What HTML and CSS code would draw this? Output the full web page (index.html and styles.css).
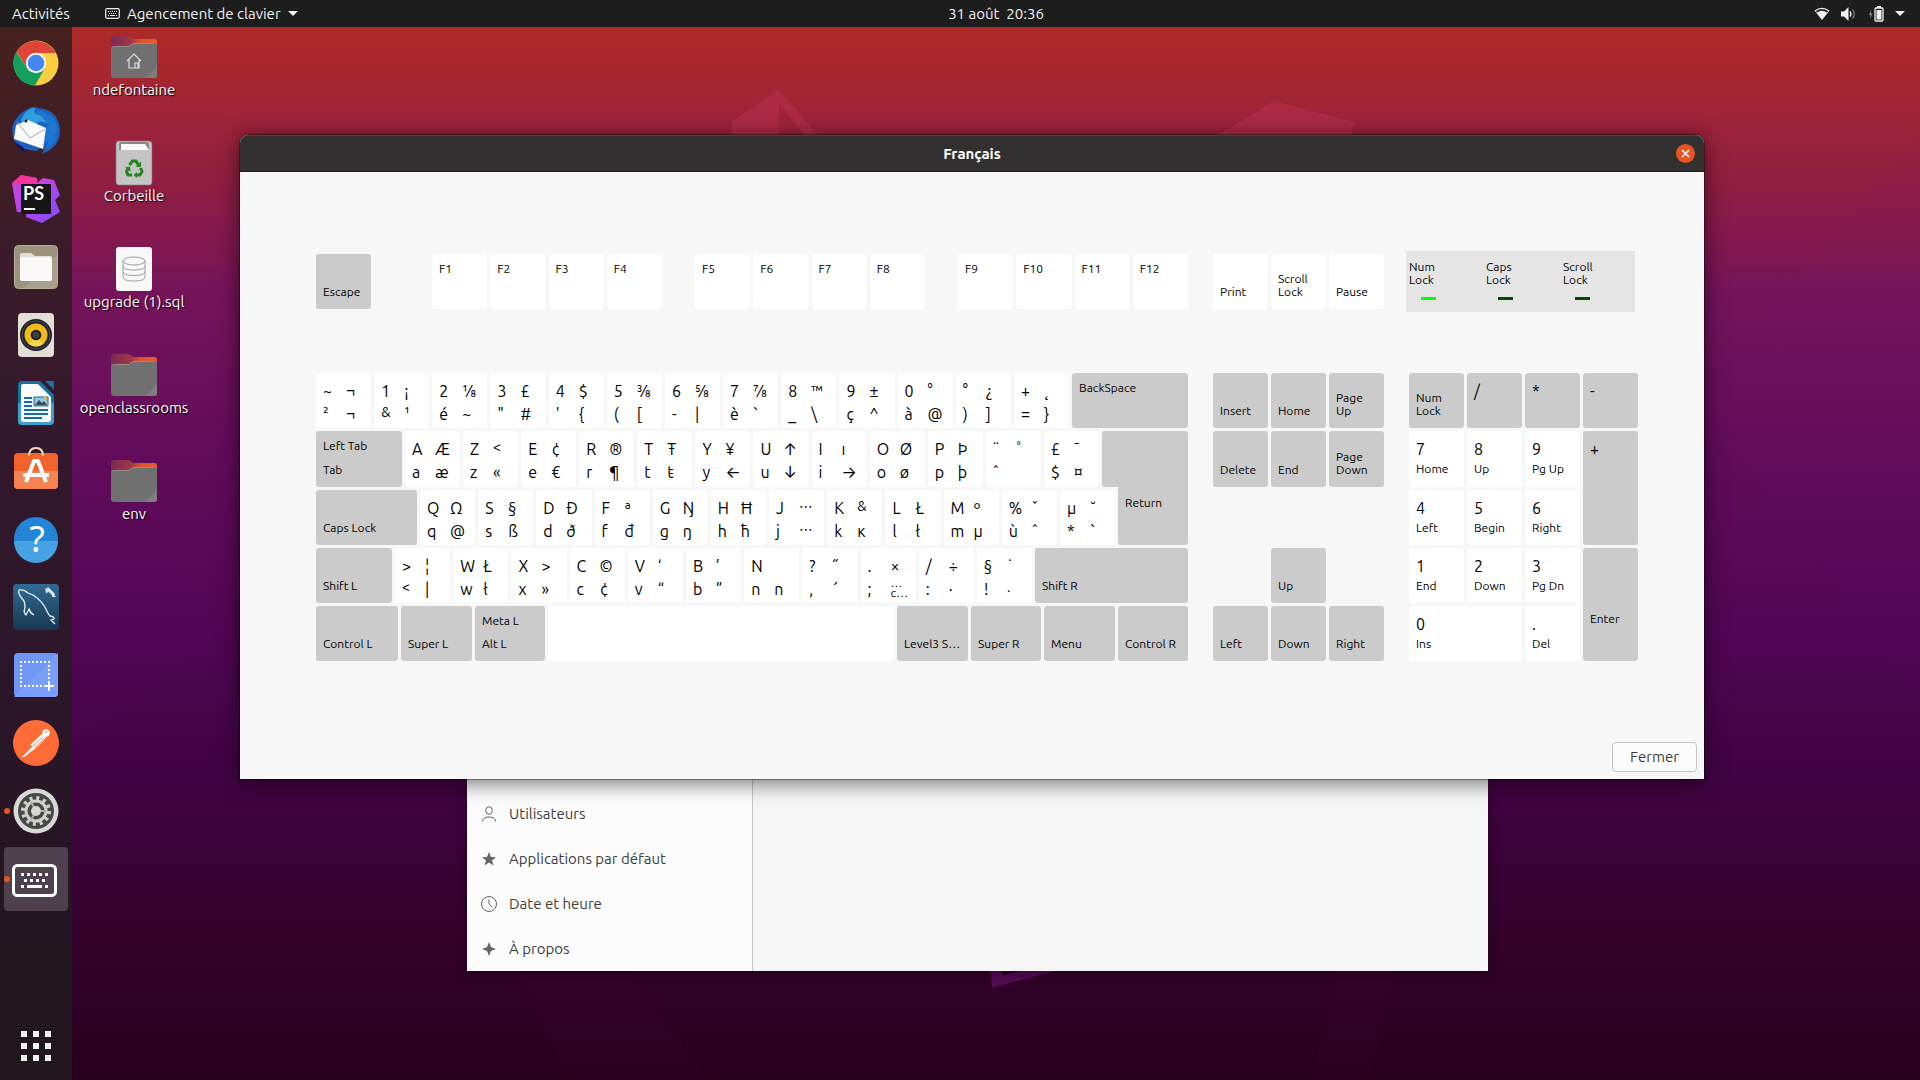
FILE: index.html
```html
<!DOCTYPE html>
<html lang="fr">
<head>
<meta charset="utf-8">
<title>Agencement de clavier</title>
<link rel="stylesheet" href="styles.css">
</head>
<body>
<header class="topbar">
  <button class="bar-item activities">Activités</button>
  <button class="bar-item app-menu">
    <svg width="15" height="11" viewBox="0 0 15 11"><rect x=".7" y=".7" width="13.6" height="9.6" rx="1.5" fill="none" stroke="#f2f2f2" stroke-width="1.2"/><path d="M3 3.5h9M4 5.5h7" stroke="#f2f2f2" stroke-dasharray="1 1"/><path d="M3 7.500h1m1 0h5m1 0h1" stroke="#f2f2f2"/></svg>
    Agencement de clavier
    <svg class="caret" width="10" height="5" viewBox="0 0 10 5"><path d="M0 0h10L5 5z" fill="#f2f2f2"/></svg>
  </button>
  <button class="bar-item clock">31 août&nbsp; 20:36</button>
  <button class="bar-item status" aria-label="Système">
    <svg width="16" height="14" viewBox="0 0 16 14"><path d="M.5 3.500Q8-2 15.500 3.500L8 13z" fill="#f2f2f2"/><path d="M1.800 4Q8 0 14.200 4L13 5.500Q8 2.200 3 5.500z" fill="#1d1d1d"/></svg>
    <svg width="16" height="14" viewBox="0 0 16 14"><path d="M0 4.500h3L7.500 0v14L3 9.500H0z" fill="#f2f2f2"/><path d="M9 4.500q2 2.500 0 5" fill="none" stroke="#f2f2f2" stroke-width="1.300"/><path d="M11.500 2.500q3.500 4.500 0 9" fill="none" stroke="#888" stroke-width="1.200"/></svg>
    <svg width="16" height="16" viewBox="0 0 16 16"><path d="M3 4L1 9h1.500L2 13l2.500-5.500H3z" fill="#888"/><rect x="7" y="2" width="8" height="13" rx="1" fill="none" stroke="#f2f2f2" stroke-width="1.300"/><path d="M9 0h4v2H9zM8.500 4h5v9.500h-5z" fill="#f2f2f2"/></svg>
    <svg width="10" height="5" viewBox="0 0 10 5"><path d="M0 0h10L5 5z" fill="#f2f2f2"/></svg>
  </button>
</header>

<div class="screen">
<svg class="wallpaper" viewBox="0 27 1920 1053" preserveAspectRatio="none" aria-hidden="true">
  <defs><linearGradient id="wall" x1="0" y1="0" x2="0" y2="1">
    <stop offset="0" stop-color="#ae2a28"/><stop offset=".07" stop-color="#a22535"/><stop offset=".14" stop-color="#921f41"/><stop offset=".25" stop-color="#76145a"/><stop offset=".4" stop-color="#620c5b"/><stop offset=".58" stop-color="#510655"/><stop offset=".7" stop-color="#430345"/><stop offset=".84" stop-color="#36022f"/><stop offset="1" stop-color="#27001e"/>
  </linearGradient></defs>
  <rect y="27" width="1920" height="1053" fill="url(#wall)"/>
  <g fill="#b52f4c" opacity=".6"><path d="M732 121L779 90v80h-47zM779 90l39 45 20 25h-14l-45-57zM1160 170l114-69 80 21-7 40z"/></g>
  <path d="M990 960l2 28 90-24-10-8-70 20-2-16z" fill="#6a1070" opacity=".6"/>
  <path d="M0 380L240 620 0 800zM1920 130L1700 400l220 300z" fill="#8a2080" opacity=".04"/>
  <path d="M510 960h110l90 120H570zM1400 960h-60l-30 120h60z" fill="#7a1080" opacity=".04"/>
</svg>

<nav class="dock" aria-label="Lanceur">
  <button class="launcher" aria-label="Chrome"><svg viewBox="0 0 48 48"><circle cx="24" cy="24" r="22.500" fill="#ffcd40"/><path d="M24 24L4.500 12.700A22.500 22.500 0 0 1 43.500 14H24z" fill="#de4437"/><path d="M4.500 12.700A22.500 22.500 0 0 0 23 46.500L33 29 24 34 15 29z" fill="#14a05c"/><path d="M5 12.700A22.500 22.500 0 0 1 43.500 14H24L15 29z" fill="#de4437"/><circle cx="24" cy="24" r="10.200" fill="#f5f5f5"/><circle cx="24" cy="24" r="8.300" fill="#4486f4"/></svg></button>
  <button class="launcher" aria-label="Thunderbird"><svg viewBox="0 0 48 48"><path d="M2 15Q8 5 16 2q5-4 10-1 17 1 21 16 4 17-9 26l-8 4 2-5-3-2-4 4Q8 43 3 35-2 25 2 15z" fill="#1c62bd"/><path d="M9 14Q13 1 24 1q-3 3-1 6 10 0 14 10l-9-3-8 6z" fill="#2fa0dc"/><path d="M27 3q17 5 19 20l-5 6 4-1q-1 9-11 15l3-10-6 5 4-20q-3-9-13-13z" fill="#1b76d2"/><path d="M3 35q2 8 11 11l-3-6z" fill="#20125c"/><path d="M4 18l12-5 18 8-3 21-29-10z" fill="#fafafa"/><path d="M5 15l13 16 15-9" fill="none" stroke="#a8a8a8"/><circle cx="14" cy="14" r="1.500" fill="#123"/></svg></button>
  <button class="launcher" aria-label="PhpStorm"><svg viewBox="0 0 48 48"><defs><linearGradient id="ps" x1="0" y1="0" x2="1" y2="1"><stop offset="0" stop-color="#ff318c"/><stop offset=".3" stop-color="#d83fd8"/><stop offset=".6" stop-color="#a946f0"/><stop offset="1" stop-color="#7a50ff"/></linearGradient></defs><path d="M0 8l9-8 16 3v5l6-5 11 2 6 15-5 5 5 12-18 11-16-6v-4l-9-1z" fill="url(#ps)"/><path d="M0 8l9-8 16 3v5l-9 6z" fill="#ff318c" opacity=".7"/><path d="M0 8l9 1v28H5z" fill="#b148ee" opacity=".7"/><path d="M9 9h30v30H9z" fill="#161616"/><path d="M12 33h11v2H12z" fill="#fff"/><text x="11" y="25" class="ps-text">PS</text></svg></button>
  <button class="launcher" aria-label="Fichiers"><svg viewBox="0 0 48 48"><rect x="2.500" y="2.500" width="43" height="43" rx="4" fill="#9b937e" stroke="#b5ae9b"/><path d="M45 12v30q0 3-3 3H12z" fill="#a8a18d"/><path d="M8 12q0-2 2-2h9l4 3h15q2 0 2 2v6H8z" fill="#e2ded4"/><rect x="8" y="14" width="32" height="24" rx="2" fill="#faf9f7"/></svg></button>
  <button class="launcher" aria-label="Rhythmbox"><svg viewBox="0 0 48 48"><rect x="6" y="2" width="36" height="44" rx="4" fill="#e4dfd6"/><circle cx="24" cy="24" r="16" fill="#20222a"/><circle cx="24" cy="24" r="14" fill="none" stroke="#4a4d55"/><circle cx="24" cy="24" r="11.500" fill="#f0bb16"/><path d="M24 24l7 9a11.500 11.500 0 0 1-14 0z" fill="#f8d850"/><circle cx="24" cy="24" r="5.300" fill="#1b1d20"/><circle cx="24" cy="24" r="3.500" fill="#3c3e40"/></svg></button>
  <button class="launcher" aria-label="LibreOffice Writer"><svg viewBox="0 0 48 48"><path d="M10 2h18l14 14v26q0 4-4 4H10q-4 0-4-4V6q0-4 4-4z" fill="#1672a5"/><path d="M6 24h36v18q0 4-4 4H10q-4 0-4-4z" fill="#3f9fcb"/><path d="M33 2h9v9z" fill="#1672a5"/><path d="M11 5h15l13 13v22q0 3-3 3H12q-3 0-3-3V7q0-2 2-2z" fill="#fafafa"/><path d="M12 19h8m-8 4h8m-8 4h8m-8 4h24m-24 4h24m-24 4h18" stroke="#0f6ea7" stroke-width="2"/><path d="M22 18h14v9H22z" fill="#8ccaf0" stroke="#146a9b"/><path d="M23 26l4-5 3 3 2-2 3 4z" fill="#444"/><path d="M31 18h4v4z" fill="#f5b41e"/></svg></button>
  <button class="launcher" aria-label="Logiciels"><svg viewBox="0 0 48 48"><rect x="2" y="6" width="44" height="36" rx="4" fill="#f2622a"/><path d="M2 24h44v14q0 4-4 4H6q-4 0-4-4z" fill="#f58250"/><path d="M17 9q0-8 7-8t7 8" fill="none" stroke="#f6deb8" stroke-width="2"/><path d="M14 35l8-21h4l8 21M11 28h26" fill="none" stroke="#fff" stroke-width="4" stroke-linejoin="round"/></svg></button>
  <button class="launcher" aria-label="Aide"><svg viewBox="0 0 48 48"><circle cx="24" cy="24" r="22" fill="#2385d8"/><path d="M2 26a22 22 0 0 0 44 0z" fill="#45a3e5"/><text x="25" y="37" text-anchor="middle" class="help-text">?</text></svg></button>
  <button class="launcher" aria-label="MySQL Workbench"><svg viewBox="0 0 48 48"><defs><linearGradient id="wb" x1="0" y1="0" x2="0" y2="1"><stop offset="0" stop-color="#326a96"/><stop offset="1" stop-color="#173850"/></linearGradient></defs><rect x="1" y="1" width="46" height="46" rx="4" fill="url(#wb)"/><path d="M12 18Q5 10 7 7q5-1 9 3 10 3 17 14 3 7 5 9 5 1 4 3l-3 1 4 4M12 18q1 3 1 7-2 4 1 7l3-6q1 4 5 6" fill="none" stroke="#e8f2f8" stroke-width="1.300"/><path d="M35 5l7 7" stroke="#dce9f2" stroke-width="3"/><path d="M33 5l4 4-3 1zM40 9l4 5-4 0z" fill="#dce9f2"/></svg></button>
  <button class="launcher" aria-label="Capture d’écran"><svg viewBox="0 0 48 48"><rect x="2" y="2" width="44" height="44" rx="4" fill="#6f97f8"/><path d="M2 46L46 2v40q0 4-4 4z" fill="#7a9ffb"/><path d="M8 11h30M8 35h26M9 14v22M37 14v18" stroke="#fff" stroke-width="2" stroke-dasharray="2 2"/><path d="M37 30v10M32 35h10" stroke="#fff" stroke-width="2"/></svg></button>
  <button class="launcher" aria-label="Postman"><svg viewBox="0 0 48 48"><circle cx="24" cy="24" r="23" fill="#ff6c37"/><circle cx="34" cy="14" r="3.700" fill="#fff"/><path d="M30 15q3 1 4 3-5 8-14 14L12 38H10l3-3 8-8-3-1z" fill="#fff"/><path d="M21 27l10-9M23 29l9-9M33 14l3-2" stroke="#ff6c37" stroke-width=".8"/></svg></button>
  <button class="launcher running" aria-label="Paramètres"><svg viewBox="0 0 48 48"><circle cx="24" cy="24" r="22.500" fill="#d9dad8"/><circle cx="24" cy="24" r="18" fill="#474846"/><circle cx="24" cy="24" r="13" fill="none" stroke="#d0d0ce" stroke-width="4" stroke-dasharray="3 3.800"/><circle cx="24" cy="24" r="10" fill="none" stroke="#d0d0ce" stroke-width="3"/><path d="M24 24h10M24 24l-5-9M24 24l-5 9" stroke="#aaa" stroke-width="2"/><circle cx="24" cy="24" r="5" fill="#d6d6d4"/></svg></button>
  <button class="launcher running active" aria-label="Agencement de clavier"><svg viewBox="0 0 48 48"><rect x="1.500" y="10.500" width="42" height="30" rx="4" fill="none" stroke="#fff" stroke-width="3"/><path d="M9 19.500h27" stroke="#fff" stroke-width="3" stroke-dasharray="3 3"/><path d="M12 25.500h21" stroke="#fff" stroke-width="3" stroke-dasharray="3 3"/><path d="M9 31.500h3m3 0h15m3 0h3" stroke="#fff" stroke-width="3"/></svg></button>
  <button class="launcher show-apps" aria-label="Afficher les applications"><svg viewBox="0 0 48 48" fill="#f0f0ee"><path d="M9 9h6v6H9zm12 0h6v6h-6zm12 0h6v6h-6zM9 21h6v6H9zm12 0h6v6h-6zm12 0h6v6h-6zM9 33h6v6H9zm12 0h6v6h-6zm12 0h6v6h-6z"/></svg></button>
</nav>

<main class="desktop">
  <svg width="0" height="0" class="defs" aria-hidden="true"><defs>
    <linearGradient id="fold" x1="0" y1="0" x2="1" y2="0"><stop offset="0" stop-color="#7a2a55"/><stop offset=".45" stop-color="#a03848"/><stop offset=".6" stop-color="#d9502c"/><stop offset="1" stop-color="#e8602c"/></linearGradient>
    <symbol id="folder" viewBox="0 0 46 46"><path d="M0 5q0-3 3-3h15l4 3h21q3 0 3 3v14H0z" fill="url(#fold)"/><path d="M0 15q0-3 3-3h15l4-3h21q3 0 3 3v29q0 3-3 3H3q-3 0-3-3z" fill="#707070"/><path d="M46 32v9q0 3-3 3h-9z" fill="#7e7e7e"/><path d="M1 13.500q0-1 2-1h15l4-3h21" fill="none" stroke="#9a8a8a"/></symbol>
  </defs></svg>
  <div class="shortcuts">
    <button class="shortcut"><svg viewBox="0 0 46 46"><use href="#folder"/><path d="M16 27l7-7 7 7M18 26v8h10v-8M24 34v-5h3v5" fill="none" stroke="#ddd" stroke-width="1.200"/></svg>ndefontaine</button>
    <button class="shortcut"><svg viewBox="0 0 46 46"><rect x="5" y="1" width="36" height="44" rx="3" fill="#c4c4c4" stroke="#8b7480" stroke-width=".6"/><path d="M8 4q0-2 2-2h26q2 0 2 2v6H8z" fill="#8a8a8a"/><path d="M10 4h24l4 6H10z" fill="#fafafa"/><g fill="none" stroke="#27831f" stroke-width="3"><path d="M18.500 25l3-4h3.500l2 3.500M29.500 28l1.500 3.500-2 3.500h-3.500M21 35h-4l-1.500-3.500 1.500-3"/></g><path d="M30 21.500v5.500h-5.500zM26 32v6l-3.500-3zM14 27.500l5-1 .5 5z" fill="#27831f"/></svg>Corbeille</button>
    <button class="shortcut"><svg viewBox="0 0 46 46"><rect x="5" y="1" width="36" height="44" rx="3" fill="#f8f8f8"/><g fill="none" stroke="#a0a0a0"><ellipse cx="23" cy="15" rx="11" ry="4"/><path d="M12 15v16q0 4 11 4t11-4V15M12 20q0 4 11 4t11-4M12 25.500q0 4 11 4t11-4"/></g></svg>upgrade (1).sql</button>
    <button class="shortcut"><svg viewBox="0 0 46 46"><use href="#folder"/></svg>openclassrooms</button>
    <button class="shortcut"><svg viewBox="0 0 46 46"><use href="#folder"/></svg>env</button>
  </div>

  <section class="window settings" aria-label="Paramètres">
    <ul class="settings-list">
      <li><svg viewBox="0 0 16 16"><ellipse cx="8" cy="4.500" rx="3.300" ry="3.800" fill="none" stroke="#666"/><path d="M1.500 15.500q0-4.500 6.500-4.500t6.500 4.500" fill="none" stroke="#666"/></svg><a href="#utilisateurs">Utilisateurs</a></li>
      <li><svg viewBox="0 0 16 16"><path d="M8 1l2 5 5 .2-4 3.200 1.500 5L8 11.500l-4.500 2.900 1.500-5-4-3.200L6 6z" fill="#666"/></svg><a href="#applications">Applications par défaut</a></li>
      <li><svg viewBox="0 0 16 16"><circle cx="8" cy="8" r="7.500" fill="none" stroke="#666"/><path d="M8 3.500V8l3 3" fill="none" stroke="#666"/></svg><a href="#date">Date et heure</a></li>
      <li><svg viewBox="0 0 16 16"><path d="M8 1l2 5 5 2-5 2-2 5-2-5-5-2 5-2z" fill="#666"/></svg><a href="#apropos">À propos</a></li>
    </ul>
    <div class="settings-page"></div>
  </section>

  <section class="window dialog" role="dialog" aria-labelledby="dialog-title">
    <header class="titlebar">
      <h1 id="dialog-title">Français</h1>
      <button class="close" aria-label="Fermer la fenêtre"><svg width="9" height="9" viewBox="0 0 9 9"><path d="M1 1l7 7M8 1L1 8" stroke="#fff" stroke-width="1.500"/></svg></button>
    </header>
    <div class="keyboard">
      <div class="row function-row">
        <button class="key mod escape"><span>Escape</span></button>
        <div class="row group"><button class="key name">F1</button><button class="key name">F2</button><button class="key name">F3</button><button class="key name">F4</button></div>
        <div class="row group"><button class="key name">F5</button><button class="key name">F6</button><button class="key name">F7</button><button class="key name">F8</button></div>
        <div class="row group"><button class="key name">F9</button><button class="key name">F10</button><button class="key name">F11</button><button class="key name">F12</button></div>
      </div>
      <div class="row">
        <button class="key low">Print</button><button class="key low">Scroll<br>Lock</button><button class="key low">Pause</button>
      </div>
      <div class="leds">
        <div class="led on">Num<br>Lock</div><div class="led">Caps<br>Lock</div><div class="led">Scroll<br>Lock</div>
      </div>

      <div class="block">
        <div class="row">
          <button class="key"><b>~</b><b>¬</b><b>²</b><b>¬</b></button>
          <button class="key"><b>1</b><b>¡</b><b class="s">&amp;</b><b>¹</b></button>
          <button class="key"><b>2</b><b>⅛</b><b>é</b><b>~</b></button>
          <button class="key"><b>3</b><b>£</b><b>"</b><b>#</b></button>
          <button class="key"><b>4</b><b>$</b><b>'</b><b>{</b></button>
          <button class="key"><b>5</b><b>⅜</b><b>(</b><b>[</b></button>
          <button class="key"><b>6</b><b>⅝</b><b>-</b><b>|</b></button>
          <button class="key"><b>7</b><b>⅞</b><b>è</b><b>`</b></button>
          <button class="key"><b>8</b><b>™</b><b>_</b><b>\</b></button>
          <button class="key"><b>9</b><b>±</b><b>ç</b><b>^</b></button>
          <button class="key"><b>0</b><b>°</b><b>à</b><b>@</b></button>
          <button class="key"><b>°</b><b>¿</b><b>)</b><b>]</b></button>
          <button class="key"><b>+</b><b>˛</b><b>=</b><b>}</b></button>
          <button class="key mod backspace"><span>BackSpace</span></button>
        </div>
        <div class="row tab-row">
          <button class="key mod tab"><span>Left Tab</span><span>Tab</span></button>
          <button class="key"><b>A</b><b>Æ</b><b>a</b><b>æ</b></button>
          <button class="key"><b>Z</b><b class="s">&lt;</b><b>z</b><b>«</b></button>
          <button class="key"><b>E</b><b>¢</b><b>e</b><b>€</b></button>
          <button class="key"><b>R</b><b>®</b><b>r</b><b>¶</b></button>
          <button class="key"><b>T</b><b>Ŧ</b><b>t</b><b>ŧ</b></button>
          <button class="key"><b>Y</b><b>¥</b><b>y</b><b>←</b></button>
          <button class="key"><b>U</b><b>↑</b><b>u</b><b>↓</b></button>
          <button class="key"><b>I</b><b>ı</b><b>i</b><b>→</b></button>
          <button class="key"><b>O</b><b>Ø</b><b>o</b><b>ø</b></button>
          <button class="key"><b>P</b><b>Þ</b><b>p</b><b>þ</b></button>
          <button class="key"><b>¨</b><b>˚</b><b>ˆ</b><b></b></button>
          <button class="key"><b>£</b><b>¯</b><b>$</b><b>¤</b></button>
        </div>
        <div class="row">
          <button class="key mod caps"><span>Caps Lock</span></button>
          <button class="key"><b>Q</b><b>Ω</b><b>q</b><b>@</b></button>
          <button class="key"><b>S</b><b>§</b><b>s</b><b>ß</b></button>
          <button class="key"><b>D</b><b>Ð</b><b>d</b><b>ð</b></button>
          <button class="key"><b>F</b><b>ª</b><b>f</b><b>đ</b></button>
          <button class="key"><b>G</b><b>Ŋ</b><b>g</b><b>ŋ</b></button>
          <button class="key"><b>H</b><b>Ħ</b><b>h</b><b>ħ</b></button>
          <button class="key"><b>J</b><b class="s">⋯</b><b>j</b><b class="s">⋯</b></button>
          <button class="key"><b>K</b><b class="s">&amp;</b><b>k</b><b>ĸ</b></button>
          <button class="key"><b>L</b><b>Ł</b><b>l</b><b>ł</b></button>
          <button class="key"><b>M</b><b>º</b><b>m</b><b>µ</b></button>
          <button class="key"><b>%</b><b>ˇ</b><b>ù</b><b>ˆ</b></button>
          <button class="key"><b>µ</b><b>˘</b><b>*</b><b>`</b></button>
          <button class="key mod tall return"><span>Return</span></button>
        </div>
        <div class="row">
          <button class="key mod shift-l"><span>Shift L</span></button>
          <button class="key"><b>&gt;</b><b>¦</b><b class="s">&lt;</b><b>|</b></button>
          <button class="key"><b>W</b><b>Ł</b><b>w</b><b>ł</b></button>
          <button class="key"><b>X</b><b>&gt;</b><b>x</b><b>»</b></button>
          <button class="key"><b>C</b><b>©</b><b>c</b><b>¢</b></button>
          <button class="key"><b>V</b><b>‘</b><b>v</b><b>“</b></button>
          <button class="key"><b>B</b><b>’</b><b>b</b><b>”</b></button>
          <button class="key"><b>N</b><b></b><b>n</b><b>n</b></button>
          <button class="key"><b>?</b><b>˝</b><b>,</b><b>´</b></button>
          <button class="key"><b>.</b><b>×</b><b>;</b><b class="stacked">…<br>c…</b></button>
          <button class="key"><b>/</b><b>÷</b><b>:</b><b>·</b></button>
          <button class="key"><b>§</b><b>˙</b><b>!</b><b class="s">.</b></button>
          <button class="key mod shift-r"><span>Shift R</span></button>
        </div>
        <div class="row">
          <button class="key mod control-l"><span>Control L</span></button>
          <button class="key mod wide"><span>Super L</span></button>
          <button class="key mod narrow"><span>Meta L</span><span>Alt L</span></button>
          <button class="key space" aria-label="Espace"></button>
          <button class="key mod wide"><span>Level3 S…</span></button>
          <button class="key mod narrow"><span>Super R</span></button>
          <button class="key mod wide"><span>Menu</span></button>
          <button class="key mod narrow"><span>Control R</span></button>
        </div>
      </div>

      <div class="pad nav-pad">
        <button class="key mod"><span>Insert</span></button><button class="key mod"><span>Home</span></button><button class="key mod"><span>Page<br>Up</span></button>
        <button class="key mod"><span>Delete</span></button><button class="key mod"><span>End</span></button><button class="key mod"><span>Page<br>Down</span></button>
        <button class="key mod up"><span>Up</span></button>
        <button class="key mod left"><span>Left</span></button><button class="key mod down"><span>Down</span></button><button class="key mod right"><span>Right</span></button>
      </div>

      <div class="pad num-pad">
        <button class="key mod"><span>Num<br>Lock</span></button><button class="key gray"><b>/</b></button><button class="key gray"><b>*</b></button><button class="key gray"><b>-</b></button>
        <button class="key"><b>7</b><small>Home</small></button><button class="key"><b>8</b><small>Up</small></button><button class="key"><b>9</b><small>Pg Up</small></button><button class="key gray rows-2"><b>+</b></button>
        <button class="key"><b>4</b><small>Left</small></button><button class="key"><b>5</b><small>Begin</small></button><button class="key"><b>6</b><small>Right</small></button>
        <button class="key"><b>1</b><small>End</small></button><button class="key"><b>2</b><small>Down</small></button><button class="key"><b>3</b><small>Pg Dn</small></button><button class="key mod tall rows-2"><span>Enter</span></button>
        <button class="key cols-2"><b>0</b><small>Ins</small></button><button class="key"><b>.</b><small>Del</small></button>
      </div>
    </div>
    <footer class="actions"><button class="action">Fermer</button></footer>
  </section>
</main>
</div>
</body>
</html>
```
FILE: styles.css
```css
* { box-sizing: border-box; }

body {
  margin: 0;
  min-height: 100vh;
  display: flex;
  flex-direction: column;
  background: #27001e;
  font: 15px/20px Ubuntu, Inter, "Noto Sans", "DejaVu Sans", sans-serif;
  color: #3d3d3d;
  overflow: hidden;
}

button {
  margin: 0;
  padding: 0;
  border: 0;
  background: none;
  font: inherit;
  color: inherit;
  text-align: left;
}

/* Top bar */
.topbar {
  display: grid;
  grid-template-columns: 72px 1fr auto 1fr;
  height: 27px;
  background: #1d1d1d;
  color: #f2f2f2;
}
.bar-item { display: flex; align-items: center; white-space: nowrap; }
.activities { padding-left: 12px; }
.app-menu { padding-left: 33px; gap: 7px; }
.status { justify-content: flex-end; padding-right: 15px; gap: 11px; }

/* Screen */
.screen { position: relative; flex: 1; display: flex; }
.wallpaper { position: absolute; inset: 0; width: 100%; height: 100%; }
.defs { position: absolute; }

/* Dock */
.dock {
  position: relative;
  width: 72px;
  display: flex;
  flex-direction: column;
  align-items: center;
  gap: 4px;
  padding: 4px 0 2px;
  background: linear-gradient(#46211f, #3c1c29 20%, #33182c 40%, #2b1629 65%, #231620 85%, #22171e);
}
.launcher {
  position: relative;
  width: 64px;
  height: 64px;
  display: grid;
  place-items: center;
  border-radius: 4px;
}
.launcher svg { width: 48px; height: 48px; }
.launcher.active { background: #4e414d; }
.launcher.running::before {
  content: "";
  position: absolute;
  left: 0;
  top: 29px;
  width: 6px;
  height: 6px;
  border-radius: 50%;
  background: #e95420;
}
.show-apps { margin-top: auto; }
.ps-text { font: 700 18px Lato, sans-serif; fill: #fff; }
.help-text { font: 36px "Noto Sans", sans-serif; fill: #fff; }

/* Desktop */
.desktop { position: relative; flex: 1; }
.shortcuts { display: flex; flex-direction: column; width: 124px; padding: 7px 6px; }
.shortcut {
  height: 106px;
  display: flex;
  flex-direction: column;
  align-items: center;
  color: #fff;
  text-shadow: 1px 1px 1px #000;
  white-space: nowrap;
}
.shortcut svg { width: 46px; height: 46px; flex: none; }

/* Windows */
.window { position: absolute; }
.settings {
  left: 395px;
  right: 432px;
  bottom: 109px;
  height: 400px;
  display: grid;
  grid-template-columns: 286px 1fr;
  background: #f6f6f6;
  box-shadow: 0 2px 10px rgba(0, 0, 0, .4);
}
.settings-list {
  margin: 0;
  padding: 0;
  list-style: none;
  display: flex;
  flex-direction: column;
  justify-content: flex-end;
  background: #fcfcfc;
  border-right: 1px solid #c6c6c6;
}
.settings-list li { display: flex; align-items: center; gap: 12px; height: 45px; padding-left: 14px; }
.settings-list svg { width: 16px; height: 16px; }
.settings-list a { color: inherit; text-decoration: none; }

.dialog {
  left: 168px;
  right: 216px;
  top: 108px;
  background: #f7f7f7;
  border-radius: 8px 8px 0 0;
  box-shadow: 0 0 0 1px rgba(0, 0, 0, .35), 0 3px 22px rgba(0, 0, 0, .6);
}
.titlebar {
  display: grid;
  grid-template-columns: 1fr auto 1fr;
  align-items: center;
  height: 37px;
  padding: 0 9px;
  background: #323030;
  border-top: 1px solid #454343;
  border-bottom: 1px solid #1b1b1b;
  border-radius: 8px 8px 0 0;
  color: #fff;
}
.titlebar h1 { grid-column: 2; margin: 0; font-size: 15px; line-height: 20px; }
.close {
  justify-self: end;
  width: 19px;
  height: 19px;
  display: grid;
  place-items: center;
  border-radius: 50%;
  background: #e95420;
}

/* Keyboard */
.keyboard {
  display: grid;
  grid-template-columns: 872fr 171fr 229fr;
  gap: 64px 25px;
  padding: 82px 66px 81px 76px;
  color: #000;
}
.row { display: flex; gap: 3px; }
.function-row { gap: 33px; }
.group { flex: 1; }
.block { display: grid; grid-template-rows: 55px 56px 55px 55px 55px; gap: 3px; }

.key {
  flex: 1 1 0;
  min-width: 0;
  min-height: 55px;
  display: grid;
  grid-template-columns: 23px 1fr;
  grid-template-rows: 23px 23px;
  padding: 7px 0 0 7px;
  border-radius: 3px;
  background: #fff;
  font-size: 16px;
  line-height: 23px;
  white-space: nowrap;
}
.key b { font-weight: 400; }
.key .s { font-size: 14px; line-height: 18px; }
.key .stacked { font-size: 12px; line-height: 10px; }
.key small { grid-column: 1 / -1; font-size: 12px; line-height: 16px; }

.mod, .name, .low {
  display: flex;
  flex-direction: column;
  justify-content: flex-end;
  padding: 8px 0 11px 7px;
  font-size: 12px;
  line-height: 13px;
}
.name, .backspace { justify-content: flex-start; }
.tab, .mod:has(span + span) { justify-content: space-between; }
.mod, .gray { background: #cbcbcb; }
.tall { padding-bottom: 36px; }

.escape { flex: 0 0 55px; margin-right: 28px; }
.backspace { flex: 0 0 116px; }
.tab { flex: 0 0 86px; }
.tab-row { padding-right: 89px; }
.caps { flex: 0 0 101px; }
.shift-l { flex: 0 0 76px; }
.shift-r { flex: 0 0 153px; }
.control-l { flex: 0 0 82px; }
.wide { flex: 0 0 71px; }
.narrow { flex: 0 0 70px; }

/* The upper arm of the L-shaped Return key reaches into the row above */
.return { position: relative; flex: 0 0 70px; border-radius: 0 0 3px 3px; }
.return::before, .return::after {
  content: "";
  position: absolute;
  right: 0;
  background: #cbcbcb;
}
.return::before { bottom: 58px; width: 86px; height: 56px; border-radius: 3px 3px 0 3px; }
.return::after { bottom: 55px; width: 70px; height: 4px; }

.pad { display: grid; grid-template-rows: 55px 56px 55px 55px 55px; gap: 3px; }
.nav-pad { grid-template-columns: repeat(3, 1fr); }
.num-pad { grid-template-columns: repeat(4, 1fr); }
.up { grid-area: 4 / 2; }
.left { grid-area: 5 / 1; }
.down { grid-area: 5 / 2; }
.right { grid-area: 5 / 3; }
.rows-2 { grid-row: span 2; }
.cols-2 { grid-column: span 2; }

.leds {
  display: grid;
  grid-template-columns: 77px 77px 1fr;
  margin: -3px 3px -3px -3px;
  padding: 9px 0 0 3px;
  background: #e5e5e5;
  font-size: 12px;
  line-height: 13px;
}
.led::after {
  content: "";
  display: block;
  width: 15px;
  height: 3px;
  margin: 11px 0 0 12px;
  background: #004b00;
}
.led.on::after { background: #00ff00; }

.actions { display: flex; justify-content: flex-end; padding: 0 7px 7px; }
.action {
  width: 85px;
  height: 30px;
  border: 1px solid #c4c4c4;
  border-radius: 4px;
  background: #fcfcfc;
  text-align: center;
}
```
